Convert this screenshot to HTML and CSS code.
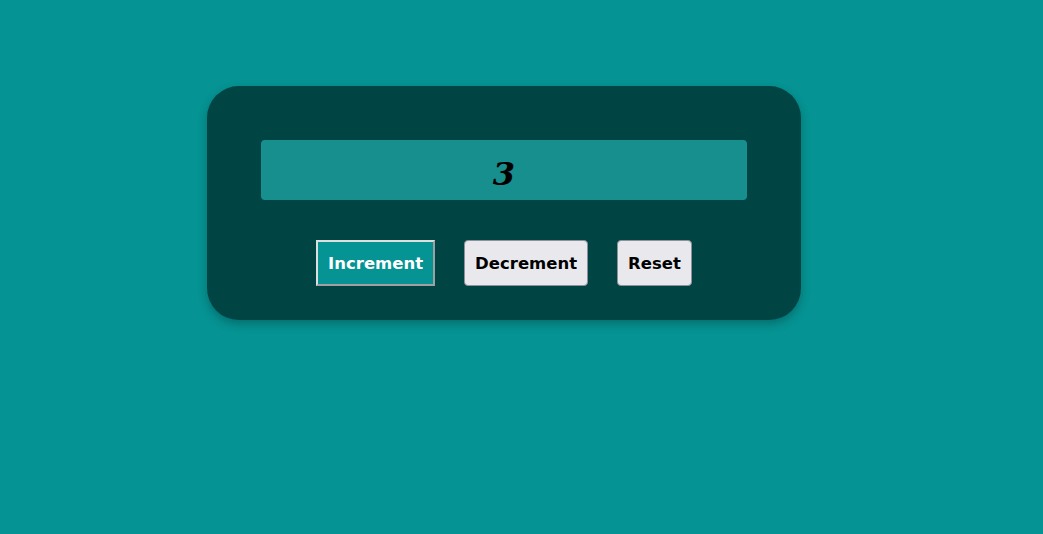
FILE: index.html
```html
<!DOCTYPE html>
<html>
<head>
<meta charset="utf-8">
<link rel="stylesheet" href="styles.css">
</head>
<body>
<div class="page">
  <div class="card">
    <div class="display"><span class="count">3</span></div>
    <div class="buttons">
      <button class="btn btn-primary">Increment</button>
      <button class="btn">Decrement</button>
      <button class="btn">Reset</button>
    </div>
  </div>
</div>
</body>
</html>
```
FILE: styles.css
```css
html, body {
  margin: 0;
  padding: 0;
  background: #069393;
  height: 100%;
}
.page {
  padding-top: 86px;
  padding-left: 207px;
}
.card {
  width: 486px;
  padding: 54px 54px 34px;
  background: #004444;
  border-radius: 32px;
  box-shadow: 0 4px 10px rgba(0, 0, 0, 0.25);
}
.display {
  height: 60px;
  box-sizing: border-box;
  padding-top: 8px;
  background: #168f8e;
  border-radius: 4px;
  display: flex;
  align-items: center;
  justify-content: center;
}
.count {
  font-family: "DejaVu Serif", serif;
  font-weight: bold;
  font-style: italic;
  font-size: 32px;
  line-height: 1;
  color: #000;
}
.buttons {
  display: flex;
  justify-content: center;
  gap: 29px;
  margin-top: 40px;
}
.btn {
  font-family: "DejaVu Sans", sans-serif;
  font-weight: bold;
  font-size: 16.5px;
  height: 46px;
  padding: 0 10px;
  background: #e9e9ed;
  color: #000;
  border: 1px solid #8f8f9d;
  border-radius: 4px;
}
.btn-primary {
  background: #069393;
  color: #fff;
  border: 2px solid;
  border-color: #dedede #a0a0a0 #a0a0a0 #dedede;
  border-radius: 0;
}
```
